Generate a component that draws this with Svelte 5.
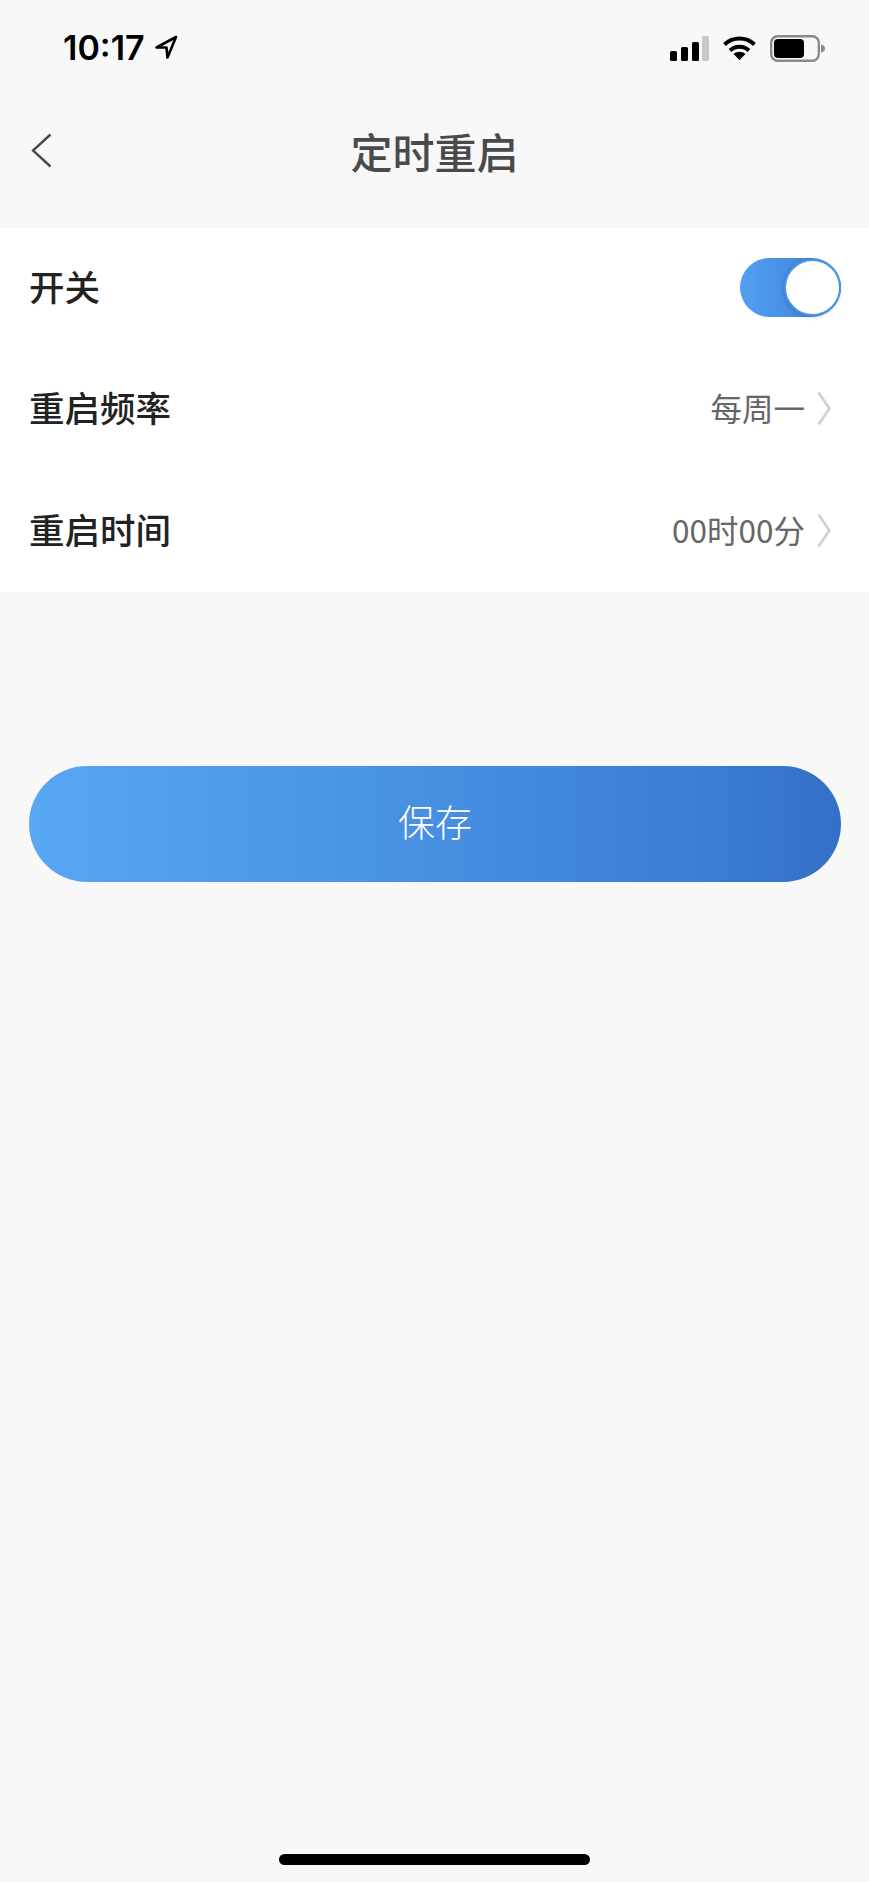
<script lang="ts">
  const rows = [
    { label: '重启频率', value: '每周一' },
    { label: '重启时间', value: '00时00分' }
  ];
</script>

<div class="page">
  <div class="status-bar">
    <div class="clock">
      <span class="time">10:17</span>
      <svg class="arrow" width="24" height="24" viewBox="0 0 24 24" fill="none">
        <path d="M22 2 2.500 12.500H12.500L13.500 22.500Z" stroke="#000" stroke-width="2.600" stroke-linejoin="round"/>
      </svg>
    </div>
    <div class="status-icons">
      <svg width="39" height="25" viewBox="0 0 39 25">
        <rect x="0" y="15" width="7" height="10" rx="1.500" fill="#000"/>
        <rect x="11" y="11" width="7" height="14" rx="1.500" fill="#000"/>
        <rect x="22" y="6" width="7" height="19" rx="1.500" fill="#000"/>
        <rect x="32" y="0" width="7" height="25" rx="1.500" fill="#c9c9c9"/>
      </svg>
      <svg width="33" height="24" viewBox="0 0 33 24" fill="none">
        <path d="M1.500 8.500C10 .6 23 .6 31.500 8.500" stroke="#000" stroke-width="4"/>
        <path d="M7 14.500C12.500 9.500 20.500 9.500 26 14.500" stroke="#000" stroke-width="4"/>
        <path d="M16.500 24 10.500 18C14 15 19 15 22.500 18Z" fill="#000"/>
      </svg>
      <svg width="55" height="27" viewBox="0 0 55 27" fill="none">
        <rect x="1.200" y="1.200" width="47.600" height="24.600" rx="6.500" stroke="#8a8a8a" stroke-width="2.400"/>
        <rect x="4" y="4" width="30" height="19" rx="4" fill="#000"/>
        <path d="M51 9.500c2.500.6 4 2 4 4s-1.500 3.400-4 4z" fill="#8a8a8a"/>
      </svg>
    </div>
  </div>

  <header class="nav">
    <button class="back" aria-label="返回">
      <svg width="21" height="35" viewBox="0 0 21 35" fill="none">
        <path d="M19.500 1.500 2 17.500 19.500 33.500" stroke="#4a4a4a" stroke-width="2.400"/>
      </svg>
    </button>
    <h1>定时重启</h1>
  </header>

  <section class="card">
    <div class="row">
      <span class="label">开关</span>
      <div class="switch"><span class="knob"></span></div>
    </div>
    {#each rows as r}
      <div class="row">
        <span class="label">{r.label}</span>
        <div class="value">
          <span class="value-text">{r.value}</span>
          <svg width="14" height="35" viewBox="0 0 14 35" fill="none">
            <path d="M1.500 1.500 12.500 17.500 1.500 33.500" stroke="#cfcfcf" stroke-width="2.600"/>
          </svg>
        </div>
      </div>
    {/each}
  </section>

  <button class="save"><span>保存</span></button>

  <div class="home-bar"></div>
</div>

<style>
  :global(body) {
    margin: 0;
    background: #f8f8f9;
  }

  .page {
    display: flex;
    flex-direction: column;
    height: 1882px;
    background: #f8f8f9;
    font-family: "Noto Sans CJK SC", "Noto Sans", sans-serif;
    overflow: hidden;
  }

  .status-bar {
    display: flex;
    justify-content: space-between;
    align-items: center;
    box-sizing: border-box;
    height: 78px;
    padding: 18px 44px 0 63px;
  }

  .clock {
    display: flex;
    align-items: center;
    gap: 9px;
  }

  .time {
    font-family: Inter, sans-serif;
    font-size: 34px;
    font-weight: 600;
    line-height: 40px;
    color: #000;
  }

  .arrow {
    margin-bottom: 3px;
  }

  .status-icons {
    display: flex;
    align-items: center;
    gap: 14px;
  }

  .nav {
    position: relative;
    display: flex;
    align-items: center;
    justify-content: center;
    height: 150px;
  }

  .nav h1 {
    margin: 0 0 6px;
    font-size: 42px;
    font-weight: 500;
    color: #4a4a4a;
  }

  .back {
    position: absolute;
    left: 31px;
    top: 55px;
    padding: 0;
    border: none;
    background: none;
    line-height: 0;
  }

  .card {
    display: grid;
    grid-auto-rows: 121.33px;
    background: #fff;
  }

  .row {
    display: flex;
    align-items: center;
    justify-content: space-between;
    padding: 0 28px 0 29px;
  }

  .label {
    padding-bottom: 6px;
    font-size: 35.500px;
    font-weight: 500;
    color: #222;
  }

  .value {
    display: flex;
    align-items: center;
    gap: 12px;
    margin-right: 10px;
    font-size: 31.500px;
    color: #666;
  }

  .value-text {
    padding-bottom: 5px;
  }

  .value svg {
    margin-bottom: 2px;
  }

  .switch {
    position: relative;
    box-sizing: border-box;
    width: 101px;
    height: 59px;
    margin-bottom: 2px;
    border-radius: 30px;
    background: linear-gradient(90deg, #529ff0, #3a7fd8);
  }

  .knob {
    position: absolute;
    top: 1px;
    right: 0;
    box-sizing: border-box;
    width: 57px;
    height: 57px;
    border: 2px solid #4d93e0;
    border-radius: 50%;
    background: #fff;
    box-shadow: -1px 1px 4px rgba(30, 60, 110, 0.25);
  }

  .save {
    display: block;
    height: 116px;
    margin: 174px 28px 0 29px;
    padding: 0 0 6px;
    border: none;
    border-radius: 58px;
    background: linear-gradient(90deg, #58a7f4, #468fe1 50%, #3a7cd3 85%, #3370c8);
    font: 300 37px "Noto Sans CJK SC", sans-serif;
    color: #fff;
  }

  .home-bar {
    width: 311px;
    height: 11px;
    margin: auto auto 17px;
    border-radius: 6px;
    background: #000;
  }
</style>
